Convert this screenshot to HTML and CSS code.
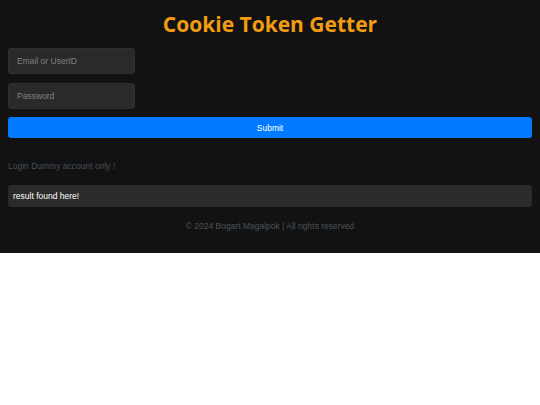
FILE: index.html
```html
<!DOCTYPE html>
<html lang="en">
<head>
<meta charset="utf-8">
<title>Cookie Token Getter</title>
<link rel="stylesheet" href="styles.css">
</head>
<body>
<div class="app">
  <h1 class="title">Cookie Token Getter</h1>
  <form class="form">
    <input class="field" type="text" placeholder="Email or UserID">
    <input class="field" type="password" placeholder="Password">
    <button class="submit" type="button">Submit</button>
  </form>
  <p class="note">Login Dummy account only !</p>
  <div class="result">result found here!</div>
  <p class="footer">© 2024 Bogart Magalpok | All rights reserved</p>
</div>
</body>
</html>
```
FILE: styles.css
```css
html, body {
  margin: 0;
  padding: 0;
  background: #ffffff;
}
.app {
  background: #121212;
  padding: 0 8px;
  height: 253px;
  box-sizing: border-box;
  font-family: "Liberation Sans", Arial, sans-serif;
  font-size: 8.5px;
}
.title {
  margin: 0;
  padding-top: 10px;
  line-height: 28px;
  text-align: center;
  font-family: "Open Sans", sans-serif;
  font-weight: 700;
  font-size: 21px;
  color: #f39c12;
}
.form {
  display: flex;
  flex-direction: column;
  align-items: flex-start;
  margin-top: 10px;
}
.field {
  width: 127px;
  height: 26px;
  box-sizing: border-box;
  margin: 0 0 9px;
  padding: 0 8px;
  background: #2a2a2a;
  border: 1px solid #2f2f2f;
  border-radius: 3px;
  color: #ddd;
  font-family: "Liberation Sans", Arial, sans-serif;
  font-size: 8.5px;
}
.field::placeholder {
  color: #808080;
}
.submit {
  width: 100%;
  height: 21px;
  margin-top: -1px;
  background: #007bff;
  border: 0;
  border-radius: 3px;
  color: #ffffff;
  font-family: "Liberation Sans", Arial, sans-serif;
  font-size: 8.5px;
}
.note {
  margin: 23px 0 0;
  line-height: 10px;
  color: #44505c;
}
.result {
  margin-top: 14px;
  height: 22px;
  line-height: 22px;
  padding: 0 5px;
  background: #2b2b2b;
  border-radius: 3px;
  color: #ffffff;
}
.footer {
  margin: 14px 0 0;
  line-height: 10px;
  text-align: center;
  color: #4a525a;
}
```
